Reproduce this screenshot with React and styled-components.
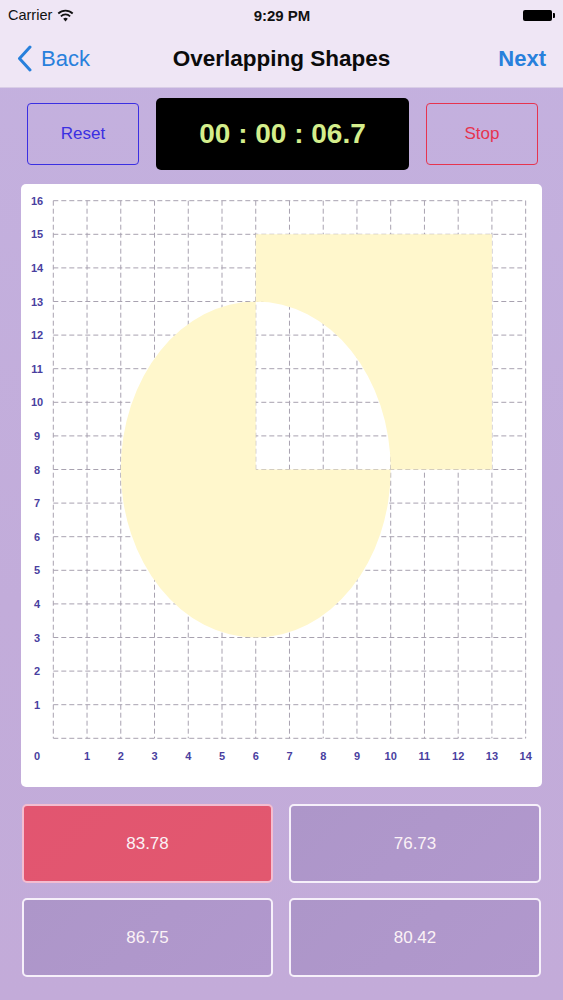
import React from "react";
import styled, { createGlobalStyle } from "styled-components";

const GlobalStyle = createGlobalStyle`
  body {
    margin: 0;
    background: #c3aedb;
    font-family: "Liberation Sans", Arial, sans-serif;
  }
  * { box-sizing: border-box; }
`;

const Page = styled.div`
  width: 563px;
  min-height: 1000px;
  display: flex;
  flex-direction: column;
  background: linear-gradient(180deg, #c4b1df 0%, #c2acda 60%, #c3abd9 100%);
`;

const TopBar = styled.header`
  background: #efe6f5;
  border-bottom: 1px solid #d9cde6;
  height: 88px;
  display: flex;
  flex-direction: column;
`;

const StatusBar = styled.div`
  height: 30px;
  display: grid;
  grid-template-columns: 1fr auto 1fr;
  align-items: center;
  padding: 0 7px 0 8px;
  font-size: 14.5px;
  color: #111;
  .left {
    display: flex;
    align-items: center;
    gap: 5px;
  }
  .time {
    font-weight: 700;
    font-size: 15px;
  }
  .right {
    display: flex;
    justify-content: flex-end;
  }
`;

const Battery = styled.div`
  position: relative;
  width: 29px;
  height: 11px;
  background: #000;
  border-radius: 2px;
  margin-right: 4px;
  &::after {
    content: "";
    position: absolute;
    right: -3px;
    top: 3px;
    width: 2px;
    height: 5px;
    background: #000;
    border-radius: 0 1px 1px 0;
  }
`;

const NavBar = styled.nav`
  flex: 1;
  display: grid;
  grid-template-columns: 1fr auto 1fr;
  align-items: center;
  padding: 0 17px 0 17px;
`;

const NavLink = styled.a`
  display: flex;
  align-items: center;
  gap: 9px;
  color: #2880dc;
  font-size: 22px;
  font-weight: ${(p) => (p.$bold ? 700 : 400)};
  justify-self: ${(p) => (p.$right ? "end" : "start")};
  cursor: pointer;
`;

const Title = styled.h1`
  margin: 0;
  font-size: 22.5px;
  font-weight: 700;
  color: #0b0b0b;
`;

const Controls = styled.div`
  display: flex;
  align-items: center;
  gap: 17px;
  margin: 10px 25px 0 27px;
`;

const OutlineButton = styled.button`
  width: 112px;
  height: 62px;
  background: transparent;
  border: 1.5px solid ${(p) => p.$color};
  border-radius: 4px;
  color: ${(p) => p.$color};
  font-family: inherit;
  font-size: 17px;
`;

const Timer = styled.div`
  width: 253px;
  height: 72px;
  background: #000;
  border-radius: 5px;
  display: flex;
  align-items: center;
  justify-content: center;
  color: #d4ee8c;
  font-size: 28px;
  font-weight: 700;
`;

const Card = styled.div`
  margin: 14px 21px 0 21px;
  height: 603px;
  background: #fff;
  border-radius: 5px;
  svg {
    display: block;
  }
`;

const Answers = styled.div`
  display: grid;
  grid-template-columns: 251px 252px;
  grid-auto-rows: 79px;
  gap: 15px 16px;
  margin: 17px 22px 0 22px;
`;

const Answer = styled.button`
  border: 2px solid ${(p) => (p.$wrong ? "#f3bdd0" : "#f6f0fa")};
  border-radius: 5px;
  background: ${(p) =>
    p.$wrong
      ? "linear-gradient(135deg, #e25570, #e2586f)"
      : "linear-gradient(135deg, #ad96c9, #b198cd)"};
  color: #fbf2f6;
  font-family: inherit;
  font-size: 17px;
`;

const X0 = 32.3;
const DX = 33.74;
const Y0 = 554.3;
const DY = 33.6;
const px = (x) => X0 + x * DX;
const py = (y) => Y0 - y * DY;

function Chart() {
  const cx = px(6);
  const cy = py(8);
  const rx = 4 * DX;
  const ry = 5 * DY;
  const shape =
    `M ${cx - rx} ${cy} a ${rx} ${ry} 0 1 0 ${2 * rx} 0 a ${rx} ${ry} 0 1 0 ${-2 * rx} 0 Z ` +
    `M ${px(6)} ${py(15)} H ${px(13)} V ${py(8)} H ${px(6)} Z`;
  const xs = Array.from({ length: 15 }, (_, i) => i);
  const ys = Array.from({ length: 17 }, (_, i) => i);
  return (
    <svg width="521" height="603" viewBox="0 0 521 603">
      <g stroke="#a8a2b0" strokeWidth="1" strokeDasharray="5 3">
        {xs.map((i) => (
          <line key={"v" + i} x1={px(i)} y1={py(16)} x2={px(i)} y2={py(0)} />
        ))}
        {ys.map((i) => (
          <line key={"h" + i} x1={px(0)} y1={py(i)} x2={px(14)} y2={py(i)} />
        ))}
      </g>
      <path d={shape} fill="#fff7cc" fillRule="evenodd" />
      <g fill="#4a3f9f" fontSize="11" fontWeight="700" textAnchor="middle" fontFamily="Liberation Sans, Arial, sans-serif">
        {ys.slice(1).map((i) => (
          <text key={"yl" + i} x="16" y={py(i) + 4}>
            {i}
          </text>
        ))}
        <text x="16" y="576">0</text>
        {xs.slice(1).map((i) => (
          <text key={"xl" + i} x={px(i)} y="576">
            {i}
          </text>
        ))}
      </g>
    </svg>
  );
}

export default function App() {
  return (
    <>
      <GlobalStyle />
      <Page>
        <TopBar>
          <StatusBar>
            <div className="left">
              Carrier
              <svg width="17" height="13" viewBox="0 0 17 13">
                <path d="M8.5 12.5 L6.2 9.8 A3.4 3.4 0 0 1 10.8 9.8 Z" fill="#111" />
                <path d="M3.9 7.3 A6.6 6.6 0 0 1 13.1 7.3" stroke="#111" strokeWidth="1.8" fill="none" />
                <path d="M1.3 4.5 A10.3 10.3 0 0 1 15.7 4.5" stroke="#111" strokeWidth="1.8" fill="none" />
              </svg>
            </div>
            <div className="time">9:29 PM</div>
            <div className="right">
              <Battery />
            </div>
          </StatusBar>
          <NavBar>
            <NavLink>
              <svg width="15" height="27" viewBox="0 0 15 27">
                <polyline points="13,2 2.5,13.5 13,25" fill="none" stroke="#2880dc" strokeWidth="3" strokeLinecap="round" strokeLinejoin="round" />
              </svg>
              Back
            </NavLink>
            <Title>Overlapping Shapes</Title>
            <NavLink $right $bold>Next</NavLink>
          </NavBar>
        </TopBar>
        <Controls>
          <OutlineButton $color="#3b2fe2">Reset</OutlineButton>
          <Timer>00 : 00 : 06.7</Timer>
          <OutlineButton $color="#e6344f">Stop</OutlineButton>
        </Controls>
        <Card>
          <Chart />
        </Card>
        <Answers>
          <Answer $wrong>83.78</Answer>
          <Answer>76.73</Answer>
          <Answer>86.75</Answer>
          <Answer>80.42</Answer>
        </Answers>
      </Page>
    </>
  );
}
